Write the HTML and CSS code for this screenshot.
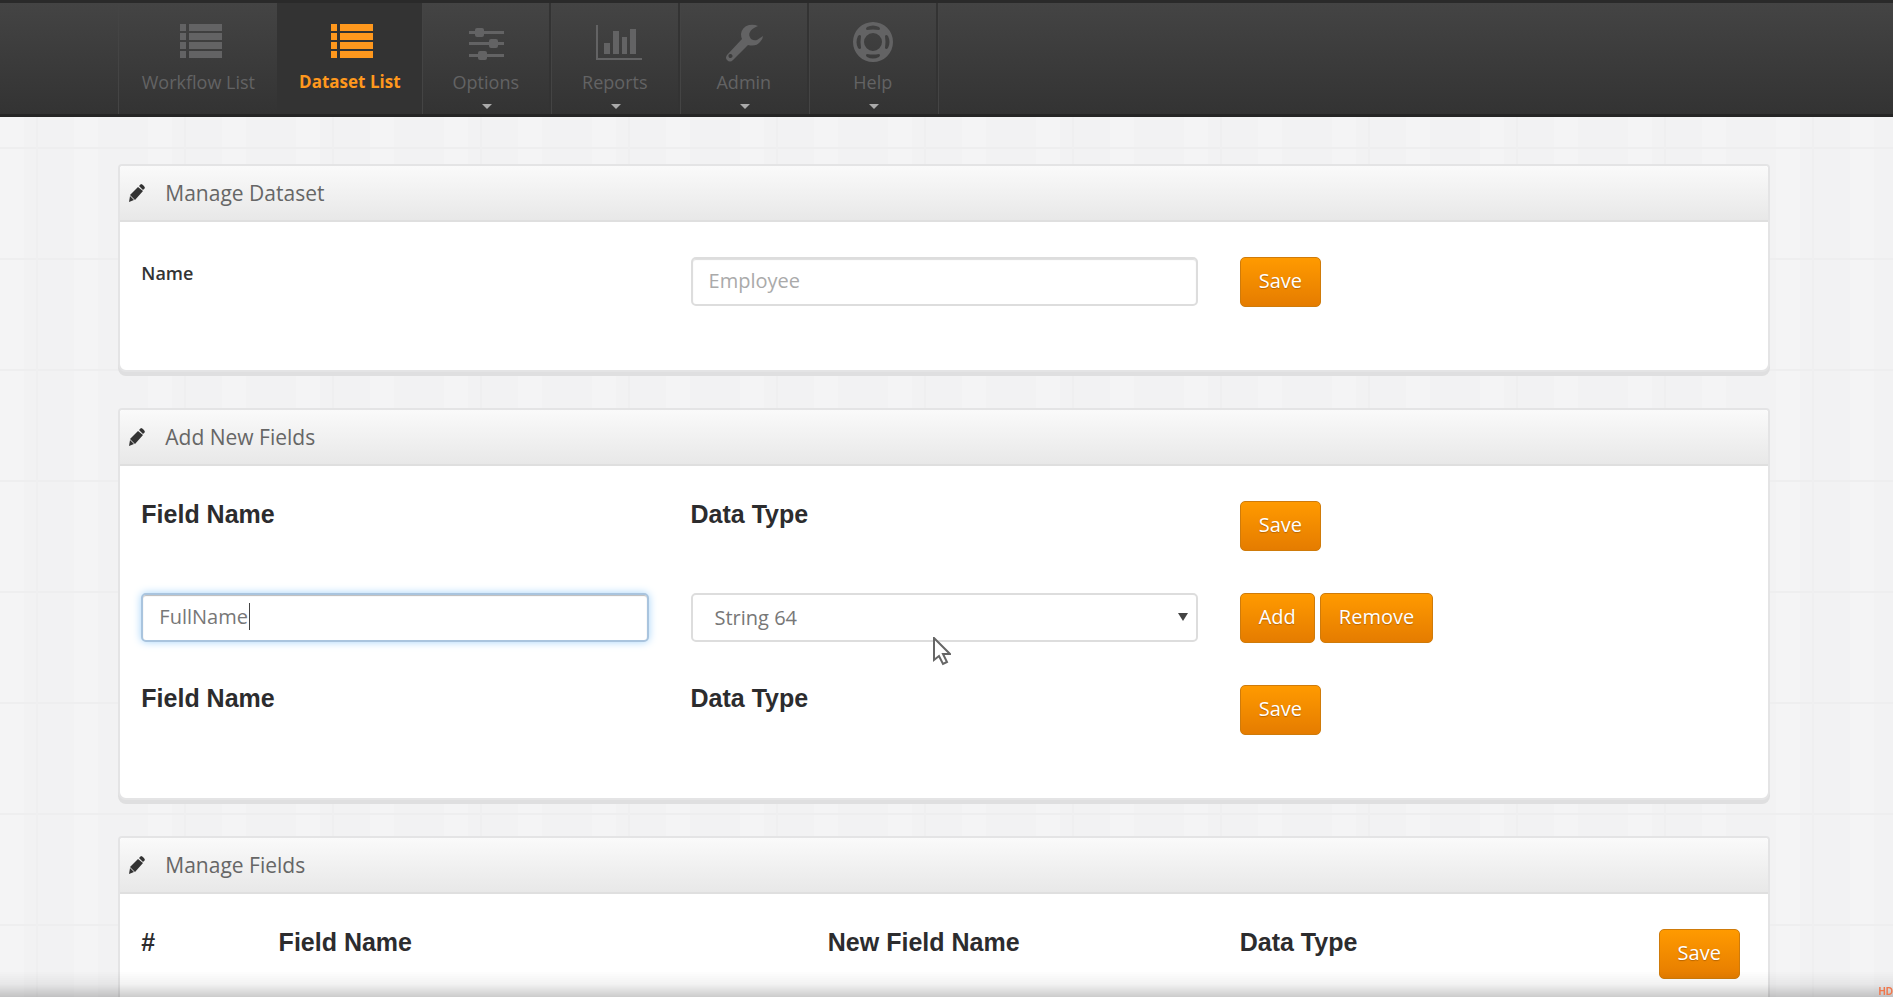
FILE: index.html
```html
<!DOCTYPE html>
<html lang="en">
    <head>
        <meta charset="UTF-8">
        <title>Dataset List</title>
        <link rel="stylesheet" href="styles.css">
    </head>
    <body>
        <!-- icons used more than once -->
        <svg class="sprite" aria-hidden="true">
            <symbol id="icon-list" viewBox="0 0 42 34">
                <path d="M0 0h6v7H0zM9 0h33v7H9zM0 9h6v7H0zM9 9h33v7H9zM0 18h6v7H0zM9 18h33v7H9zM0 27h6v7H0zM9 27h33v7H9z"/>
            </symbol>
            <symbol id="icon-pencil" viewBox="0 0 16 18">
                <path d="M0 18l1-6 4 4zM1 11L9 3l5 4-8 9zM10 2l2-2q1 0 3 2l1 2-2 2z"/>
            </symbol>
        </svg>

        <nav class="navbar">
            <ul class="container">
                <li class="wide"><a href="#"><svg class="icon list"><use href="#icon-list"/></svg><span>Workflow List</span></a></li>
                <li class="active"><a href="#"><svg class="icon list"><use href="#icon-list"/></svg><span>Dataset List</span></a></li>
                <li class="dropdown"><a href="#">
                    <svg class="icon" viewBox="0 0 42 42"><path d="M4 10h35v3H4zM4 21h35v3H4zM4 33h35v3H4z"/><rect x="10" y="7" width="9" height="9" rx="2"/><rect x="24" y="18" width="9" height="9" rx="2"/><rect x="13" y="30" width="9" height="9" rx="2"/></svg>
                    <span>Options</span></a></li>
                <li class="dropdown"><a href="#">
                    <svg class="icon chart" viewBox="0 0 48 42"><path d="M1 4h2v33h44v2H1zM9 22h6v11H9zM18 10h6v23h-6zM27 16h5v17h-5zM35 8h6v25h-6z"/></svg>
                    <span>Reports</span></a></li>
                <li class="dropdown"><a href="#">
                    <svg class="icon" viewBox="0 0 42 42"><path fill-rule="evenodd" d="M35 5q-4-2-9-1-7 2-8 9 0 3 1 5L4 34q-2 3 0 5 3 3 6 0l15-15q8 2 12-3 3-3 3-6l-6 4q-3 1-6-1-3-4-1-7 1-3 8-6zM7 33a2 2 0 1 0 1 4 2 2 0 0 0-1-4z"/></svg>
                    <span>Admin</span></a></li>
                <li class="dropdown"><a href="#">
                    <svg class="icon" viewBox="0 0 42 42"><path fill-rule="evenodd" d="M21 1a20 20 0 1 0 0 40 20 20 0 0 0 0-40zM21 12a9 9 0 1 1 0 18 9 9 0 0 1 0-18zM15 6q6-3 12 0 2 2 0 3-6-1-12 0-2-1 0-3zM15 36q6 3 12 0 2-2 0-3-6 1-12 0-2 1 0 3zM6 15q-3 6 0 12 2 2 3 0-1-6 0-12-1-2-3 0zM36 15q3 6 0 12-2 2-3 0 1-6 0-12 1-2 3 0z"/></svg>
                    <span>Help</span></a></li>
            </ul>
        </nav>

        <main class="container">
            <section class="panel">
                <h2><svg class="pencil"><use href="#icon-pencil"/></svg>Manage Dataset</h2>
                <form class="panel-body">
                    <div class="row">
                        <div class="col-4"><label for="name">Name</label></div>
                        <div class="col-4"><input type="text" id="name" placeholder="Employee"></div>
                        <div class="col-4"><button type="button">Save</button></div>
                    </div>
                </form>
            </section>

            <section class="panel">
                <h2><svg class="pencil"><use href="#icon-pencil"/></svg>Add New Fields</h2>
                <form class="panel-body">
                    <div class="row">
                        <div class="col-4"><h3>Field Name</h3></div>
                        <div class="col-4"><h3>Data Type</h3></div>
                        <div class="col-4"><button type="button">Save</button></div>
                    </div>
                    <div class="row">
                        <div class="col-4 editing"><input type="text" aria-label="Field Name" value="FullName"></div>
                        <div class="col-4 select">
                            <select aria-label="Data Type"><option>String 64</option></select>
                            <svg class="cursor" viewBox="0 0 18 29"><path d="M1 1v22l5-4 4 8 4-2-4-8h7z"/></svg>
                        </div>
                        <div class="col-4"><button type="button">Add</button><button type="button">Remove</button></div>
                    </div>
                    <div class="row">
                        <div class="col-4"><h3>Field Name</h3></div>
                        <div class="col-4"><h3>Data Type</h3></div>
                        <div class="col-4"><button type="button">Save</button></div>
                    </div>
                </form>
            </section>

            <section class="panel">
                <h2><svg class="pencil"><use href="#icon-pencil"/></svg>Manage Fields</h2>
                <form class="panel-body">
                    <div class="row">
                        <div class="col-1"><h3>#</h3></div>
                        <div class="col-4"><h3>Field Name</h3></div>
                        <div class="col-3"><h3>New Field Name</h3></div>
                        <div class="col-3"><h3>Data Type</h3></div>
                        <div class="col-1 center"><button type="button">Save</button></div>
                    </div>
                </form>
            </section>
        </main>

        <div class="shade"></div>
        <div class="mark">HD</div>
    </body>
</html>
```
FILE: styles.css
```css
* { box-sizing: border-box; }
html { scrollbar-width: none; }
body {
    margin: 0;
    font: 20px/28px 'Open Sans', sans-serif;
    color: #666;
    background-color: #f2f2f3;
    background-image:
        linear-gradient(90deg, transparent 36px, #efeff0 36px, #efeff0 38px, transparent 38px),
        linear-gradient(transparent 36px, #eeeeef 36px, #eeeeef 38px, transparent 38px),
        linear-gradient(90deg, #f4f4f5 24px, transparent 24px);
    background-size: 148px 148px, 111px 111px, 74px 74px;
}
.sprite { display: none; }
.container { margin: 0 6.5% 0 6.25%; }

/* top navigation */
.navbar { height: 117px; background: linear-gradient(#444, #333); border-top: 3px solid #2a2a2a; border-bottom: 3px solid #252525; }
.navbar ul { display: flex; height: 111px; padding: 0; list-style: none; border-left: 1px solid #444; }
.navbar li { position: relative; width: 129px; border-right: 2px solid #333; box-shadow: 1px 0 #444; }
.navbar li.wide { width: 160px; }
.navbar li.active { width: 143px; background: #333; }
.navbar a { display: flex; flex-direction: column; align-items: center; padding-top: 18px; color: #636364; font-size: 18px; text-decoration: none; }
.navbar span { margin-top: 5px; }
.navbar .active a { color: #ff981d; font-size: 17px; font-weight: bold; }
.navbar .icon { width: 42px; height: 42px; fill: currentColor; }
.navbar .list { height: 34px; margin: 3px 0 5px 5px; }
.navbar .chart { width: 48px; margin-left: 9px; }
.navbar .dropdown:after { content: ""; position: absolute; left: 60px; bottom: 5px; border: 5px solid transparent; border-top-color: #aaa; border-bottom: 0; }

/* panels */
.panel { margin: 0 0 36px; border: 2px solid #e4e4e5; border-radius: 4px 4px 8px 8px; background: #fff; box-shadow: 0 4px 0 #dfdfe0; }
main .panel:first-child { margin-top: 47px; }
.panel h2 { display: flex; align-items: center; height: 56px; margin: 0; padding-left: 9px; border-bottom: 2px solid #dfdfdf; border-radius: 4px 4px 0 0; background: linear-gradient(#fafafa, #e8e8e8); font-size: 21px; font-weight: normal; }
.pencil { width: 16px; height: 18px; margin-right: 20px; fill: #333; }
.panel-body { padding: 35px 0 21px; }

.row { display: flex; height: 92px; }
.col-1 { width: 8.3333%; padding: 0 21px; }
.col-3 { width: 25%; padding: 0 21px; }
.col-4 { width: 33.3333%; padding: 0 21px; }
.center { padding: 0; text-align: center; }

label { display: block; padding-top: 2px; color: #333; font-size: 18px; font-weight: 600; }
h3 { margin: 0; color: #2c2c2e; font: bold 25px/26px 'Liberation Sans', sans-serif; }

input, select { display: block; width: 100%; height: 49px; padding: 0 16px 2px; border: 2px solid #ddd; border-radius: 5px; background: #fff; color: #777; font: inherit; outline: 0; }
input { box-shadow: inset 0 1px 1px #ddd; }
input::placeholder { color: #aaa; }
select { padding: 0 22px; appearance: none; }
.select, .editing { position: relative; }
.select:after { content: ""; position: absolute; top: 20px; right: 31px; border: 5px solid transparent; border-top: 8px solid #444; border-bottom: 0; }
.editing input { border-color: #a9c4de; box-shadow: inset 0 1px 1px #bbb, 0 0 8px #a5d4fa; }
/* text caret */
.editing:after { content: ""; position: absolute; left: 129px; top: 10px; width: 1px; height: 27px; background: #444; }
.cursor { position: absolute; left: 263px; top: 44px; width: 18px; height: 29px; fill: #fff; stroke: #666; stroke-width: 2; }

button { height: 50px; margin-right: 5px; padding: 0 18px 2px; border: 1px solid #cf7b0a; border-radius: 5px; background: linear-gradient(#ff9a00, #e57c00); color: #fff; font: inherit; text-shadow: 0 1px 1px #b86500; }
.center button { margin: 0; }

/* fade along the bottom edge of the window */
.shade { position: fixed; left: 0; right: 0; bottom: 0; height: 26px; background: linear-gradient(transparent, rgba(0, 0, 0, 0.05) 50%, rgba(0, 0, 0, 0.2)); pointer-events: none; }
.mark { position: fixed; right: 0; bottom: 0; color: #f0774c; font: bold 10px/10px 'Liberation Sans', sans-serif; }
```
